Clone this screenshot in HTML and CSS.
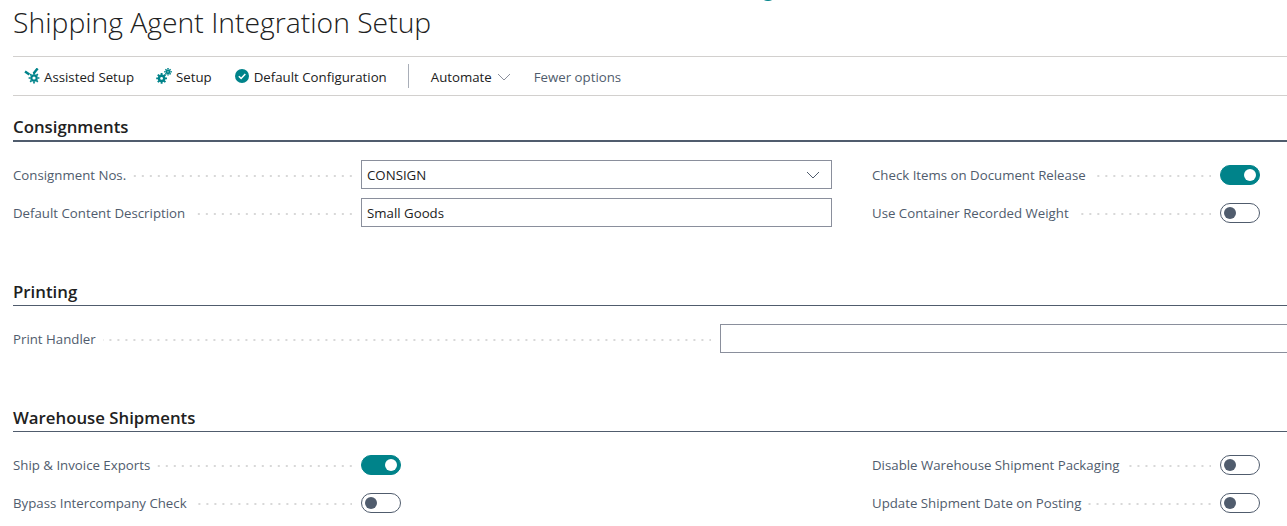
FILE: index.html
```html
<!DOCTYPE html>
<html lang="en">
<head>
<meta charset="utf-8">
<title>Shipping Agent Integration Setup</title>
<link rel="stylesheet" href="styles.css">
</head>
<body>
<div class="spinner-arc"></div>
<header class="title-bar"><h1 class="title">Shipping Agent Integration Setup</h1></header>
<nav class="toolbar">
  <button class="action">
    <svg class="icon" viewBox="0 0 16 16" width="16" height="16"><path class="teal-stroke" d="M1 3.6 L5.4 6.6" stroke-width="2.4"/><path class="teal-stroke" d="M9.6 5.4 L13.6 0.4" stroke-width="2.4"/><circle class="teal-stroke" cx="10" cy="10" r="2.7" stroke-width="2.2"/><path class="teal-stroke" d="M10 4.6V6.4M10 13.6V15.4M4.6 10H6.4M13.6 10H15.4M6.2 6.2L7.4 7.4M12.6 12.6L13.8 13.8M6.2 13.8L7.4 12.6M12.6 7.4L13.8 6.2" stroke-width="1.7"/></svg>
    <span>Assisted Setup</span>
  </button>
  <button class="action">
    <svg class="icon" viewBox="0 0 16 16" width="16" height="16"><circle class="teal-stroke" cx="5.6" cy="10.4" r="2.6" stroke-width="2.4"/><path class="teal-stroke" d="M5.6 5V7M5.6 13.8V15.8M0.2 10.4H2.2M9 10.4H11M1.8 6.6L3.2 8M8 12.8L9.4 14.2M1.8 14.2L3.2 12.8M8 8L9.4 6.6" stroke-width="1.9"/><circle class="teal-stroke" cx="12" cy="3.8" r="1.5" stroke-width="1.8"/><path class="teal-stroke" d="M12 0V1.4M12 6.2V7.6M8.2 3.8H9.6M14.4 3.8H15.8M9.4 1.2L10.4 2.2M13.6 5.4L14.6 6.4M9.4 6.4L10.4 5.4M13.6 2.2L14.6 1.2" stroke-width="1.5"/></svg>
    <span>Setup</span>
  </button>
  <button class="action">
    <svg class="icon" viewBox="0 0 16 16" width="16" height="16"><circle class="teal-fill" cx="8" cy="8" r="7"/><path d="M4.8 8.2 L7.1 10.4 L11.3 5.9" fill="none" stroke="#fff" stroke-width="1.5"/></svg>
    <span>Default Configuration</span>
  </button>
  <span class="divider"></span>
  <button class="action automate">
    <span>Automate</span>
    <svg class="chev" viewBox="0 0 14 8" width="14" height="8"><path d="M1 1 L7 7 L13 1" fill="none" stroke="#8a8f9c" stroke-width="1"/></svg>
  </button>
  <button class="action muted"><span>Fewer options</span></button>
</nav>

<section class="section first">
  <h2 class="section-title thick">Consignments</h2>
  <div class="columns">
    <div class="col">
      <div class="row"><label class="label">Consignment Nos.</label><span class="dots"></span>
        <div class="field select"><span>CONSIGN</span><svg viewBox="0 0 14 8" width="14" height="8"><path d="M1 1 L7 7 L13 1" fill="none" stroke="#505c6d" stroke-width="1"/></svg></div></div>
      <div class="row"><label class="label">Default Content Description</label><span class="dots"></span>
        <div class="field"><span>Small Goods</span></div></div>
    </div>
    <div class="col">
      <div class="row"><label class="label">Check Items on Document Release</label><span class="dots"></span><span class="toggle on"></span></div>
      <div class="row"><label class="label">Use Container Recorded Weight</label><span class="dots"></span><span class="toggle"></span></div>
    </div>
  </div>
</section>

<section class="section printing">
  <h2 class="section-title">Printing</h2>
  <div class="row wide"><label class="label">Print Handler</label><span class="dots"></span><div class="field bleed"></div></div>
</section>

<section class="section warehouse">
  <h2 class="section-title">Warehouse Shipments</h2>
  <div class="columns">
    <div class="col">
      <div class="row"><label class="label">Ship &amp; Invoice Exports</label><span class="dots"></span><div class="field-slot"><span class="toggle on"></span></div></div>
      <div class="row"><label class="label">Bypass Intercompany Check</label><span class="dots"></span><div class="field-slot"><span class="toggle"></span></div></div>
    </div>
    <div class="col">
      <div class="row"><label class="label">Disable Warehouse Shipment Packaging</label><span class="dots"></span><span class="toggle"></span></div>
      <div class="row"><label class="label">Update Shipment Date on Posting</label><span class="dots"></span><span class="toggle"></span></div>
    </div>
  </div>
</section>
</body>
</html>
```
FILE: styles.css
```css
* { box-sizing: border-box; }
html, body { margin: 0; height: 526px; overflow: hidden; }
body {
  position: relative;
  background: #fff;
  font-family: "Open Sans", "Noto Sans", sans-serif;
  font-size: 13.25px;
  color: #505c6d;
}
.spinner-arc {
  position: absolute;
  top: -9px;
  left: 759px;
  width: 18px;
  height: 10px;
  border-radius: 0 0 10px 10px;
  background: #00838a;
}
.title-bar {
  height: 57px;
  margin-left: 13px;
  border-bottom: 1px solid #d2d0ce;
}
.title {
  margin: 0;
  padding-top: 3px;
  font-size: 28.3px;
  line-height: 38px;
  font-weight: 300;
  color: #212121;
}
.toolbar {
  display: flex;
  align-items: center;
  height: 39px;
  margin-left: 13px;
  padding: 2px 0 0 11px;
  border-bottom: 1px solid #d2d0ce;
}
.action {
  display: flex;
  align-items: center;
  gap: 4px;
  padding: 0;
  margin-right: 22px;
  border: 0;
  background: none;
  font: inherit;
  color: #212121;
}
.icon { flex: none; margin-top: -2px; }
.teal-stroke { stroke: #00838a; fill: none; }
.teal-fill { fill: #00838a; }
.divider {
  width: 1px;
  height: 24px;
  margin: -2px 22px 0 -1px;
  background: #a9aeb8;
}
.automate { gap: 5px; margin-right: 23px; }
.muted { color: #505c6d; margin-right: 0; }
.section { margin-left: 13px; }
.first { margin-top: 18px; }
.printing { margin-top: 46px; }
.warehouse { margin-top: 46px; }
.section-title {
  margin: 0;
  height: 28px;
  font-size: 16.8px;
  line-height: 28px;
  font-weight: 600;
  color: #212121;
  border-bottom: 1px solid #505c6d;
}
.thick { line-height: 26px; border-bottom-width: 2px; }
.columns {
  display: grid;
  grid-template-columns: 819px 388px;
  column-gap: 40px;
  padding-top: 14px;
}
.printing .row { margin-top: 14px; }
.row {
  display: flex;
  align-items: center;
  height: 38px;
}
.label { white-space: nowrap; }
.dots {
  flex: 1;
  height: 2px;
  margin: 2px 9px 0 7px;
  background-image: linear-gradient(to right, transparent 6px, #d8d8d8 6px);
  background-size: 8px 2px;
  background-position: right center;
}
.field {
  flex: none;
  width: 471px;
  height: 29px;
  margin-bottom: 1px;
  display: flex;
  align-items: center;
  justify-content: space-between;
  padding: 0 11px 0 5px;
  border: 1px solid #8a8f9c;
  color: #212121;
}
.wide .field.bleed { width: 580px; margin-right: -13px; }
.field-slot { flex: none; width: 471px; }
.toggle {
  flex: none;
  position: relative;
  display: block;
  width: 40px;
  height: 20px;
  border: 1px solid #505c6d;
  border-radius: 10px;
  background: #fff;
}
.toggle::after {
  content: "";
  position: absolute;
  top: 3px;
  left: 3px;
  width: 12px;
  height: 12px;
  border-radius: 50%;
  background: #505c6d;
}
.toggle.on { background: #00838a; border-color: #00838a; }
.toggle.on::after { left: auto; right: 3px; background: #fff; }
```
